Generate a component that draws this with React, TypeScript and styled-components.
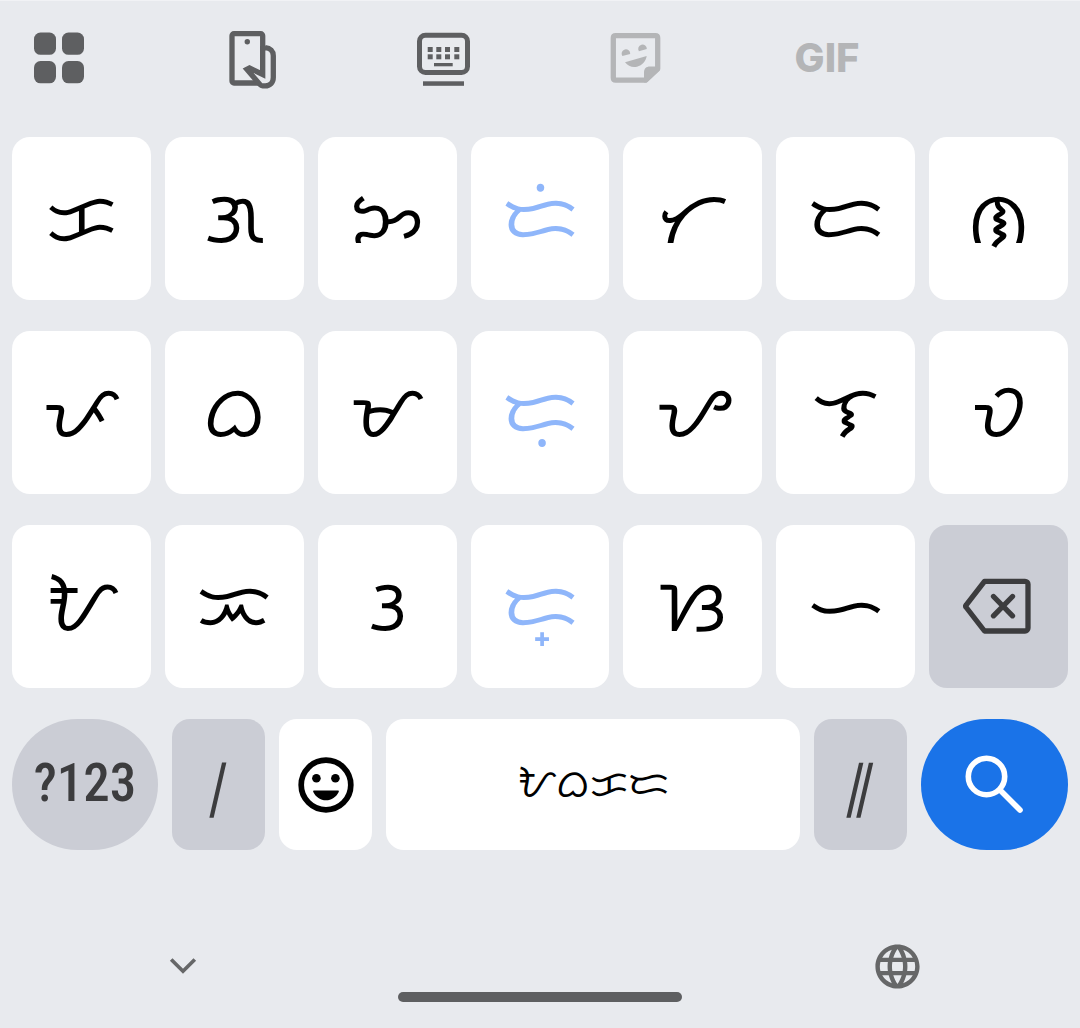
import React from "react";
import styled, { createGlobalStyle } from "styled-components";
import { MdLanguage } from "react-icons/md";

const GlobalStyle = createGlobalStyle`
  *, *::before, *::after { box-sizing: border-box; }
  body { margin: 0; background: #e8eaee; }
  button { margin: 0; padding: 0; border: 0; background: none; color: inherit; font: inherit; cursor: pointer; }
  svg { display: block; flex: none; }
`;

const Keyboard = styled.main`
  display: flex;
  flex-direction: column;
  border-top: 1px solid #f1f2f5;
  background: #e8eaee;
  color: #000;
  font-family: "Noto Sans Tagalog", "Noto Sans", Roboto, sans-serif;
`;

const Toolbar = styled.div`
  display: grid;
  grid-template-columns: repeat(6, 64px);
  justify-content: space-between;
  align-items: center;
  height: 136px;
  padding: 0 29px 22px 27px;
`;

const ToolButton = styled.button<{ $muted?: boolean }>`
  display: flex;
  align-items: center;
  justify-content: center;
  height: 64px;
  color: ${(p) => (p.$muted ? "#b4b5b7" : "#5e5f61")};
`;

const GifLabel = styled.span`
  font: 800 40px/64px Inter, Roboto, sans-serif;
`;

const Keys = styled.div`
  display: grid;
  gap: 31px;
  padding: 0 12px;
`;

const LetterRow = styled.div`
  display: grid;
  grid-template-columns: repeat(7, 1fr);
  grid-auto-rows: 163px;
  gap: 14px;
`;

const BottomRow = styled.div`
  display: grid;
  grid-template-columns: 146fr 93fr 93fr 414fr 93fr 147fr;
  grid-auto-rows: 131px;
  gap: 14px;
`;

type Tone = "plain" | "grey" | "action";

const tones: Record<Tone, { background: string; color: string }> = {
  plain: { background: "#fff", color: "#000" },
  grey: { background: "#cbcdd5", color: "#3c3c3e" },
  action: { background: "#1a73e8", color: "#fff" },
};

const Key = styled.button<{ $tone?: Tone; $round?: boolean }>`
  display: flex;
  align-items: center;
  justify-content: center;
  min-width: 0;
  border-radius: ${(p) => (p.$round ? "66px" : "18px")};
  background: ${(p) => tones[p.$tone ?? "plain"].background};
  color: ${(p) => tones[p.$tone ?? "plain"].color};
`;

const LetterKey = styled(Key)<{ $mark?: boolean }>`
  padding-bottom: 8px;
  font-size: 73px;
  line-height: 100px;
  color: ${(p) => (p.$mark ? "#8fb6fa" : "#000")};
`;

const SymbolsLabel = styled.span`
  padding-bottom: 4px;
  font: 500 53px/60px "Roboto Condensed", Roboto, sans-serif;
`;

const StopMark = styled.span`
  font-size: 62px;
  line-height: 80px;
`;

const SpaceLabel = styled.span`
  padding-bottom: 6px;
  font-size: 39px;
  line-height: 56px;
`;

const NavBar = styled.nav`
  display: flex;
  justify-content: space-between;
  padding: 90px 157px 0;
  color: #666768;
`;

const NavButton = styled.button`
  display: flex;
  align-items: center;
  justify-content: center;
  width: 52px;
  height: 52px;
`;

const HomeHandle = styled.div`
  align-self: center;
  width: 284px;
  height: 10px;
  margin-bottom: 26px;
  border-radius: 5px;
  background: #5e5f61;
`;

const AppsIcon = () => (
  <svg width="64" height="64" viewBox="0 0 64 64" fill="currentColor" aria-hidden="true">
    <rect x="7" y="6.5" width="22" height="22.3" rx="6.5" />
    <rect x="35" y="6.5" width="22" height="22.3" rx="6.5" />
    <rect x="7" y="35" width="22" height="22.3" rx="6.5" />
    <rect x="35" y="35" width="22" height="22.3" rx="6.5" />
  </svg>
);

const OneHandedIcon = () => (
  <svg width="64" height="64" viewBox="0 0 64 64" fill="none" stroke="currentColor" strokeWidth="5.3" aria-hidden="true">
    <rect x="13" y="7.7" width="30.7" height="49.3" rx="2" />
    <circle cx="28.3" cy="15.7" r="2.7" fill="currentColor" stroke="none" />
    <path d="M46.3 21.7c5 .4 8 3.5 8 8V51.5c0 5-3.4 8.3-8 8.3H43.5c-1 0-1.800-.5-2.400-1.200L27.500 43l2.500-1.600 13.700 6.800z" fill="#e8eaee" stroke="none" />
    <path d="M46.3 21.7c5 .4 8 3.5 8 8V51.5c0 5-3.4 8.3-8 8.3H43.500c-1 0-1.800-.5-2.400-1.200L27.900 43.300 30.500 42 43.700 48.400V20" />
  </svg>
);

const KeyboardIcon = () => (
  <svg width="64" height="64" viewBox="0 0 64 64" fill="currentColor" aria-hidden="true">
    <rect x="8.5" y="9.3" width="48" height="37.3" rx="6" fill="none" stroke="currentColor" strokeWidth="5" />
    {[16.7, 25.3, 34, 43.3].map((x) => (
      <g key={x}>
        <rect x={x} y="21" width="5" height="5" />
        <rect x={x} y="28.3" width="5" height="5" />
      </g>
    ))}
    <rect x="23" y="37" width="18.7" height="3.3" />
    <rect x="12" y="55.3" width="41" height="4.5" />
  </svg>
);

const StickerIcon = () => (
  <svg width="64" height="64" viewBox="0 0 64 64" fill="currentColor" aria-hidden="true">
    <path d="M54.7 42.8V12c0-1.500-.8-2.400-2.400-2.400H12.700c-1.600 0-2.400.9-2.400 2.400v39.800c0 1.500.8 2.400 2.400 2.400h30z" fill="none" stroke="currentColor" strokeWidth="5.3" strokeLinejoin="round" />
    <path d="M41 56.5V46.500c0-4 2.200-6 6-6h10V44L43.700 56.500z" />
    <path d="M19.300 30A4.300 4.300 0 1 1 27.200 27.900z" />
    <path d="M35.900 25.200A4.300 4.300 0 1 1 43.800 23.100z" />
    <path d="M22 36.300 43.700 30c-.7 5-4.500 9.500-9.700 10.700-4.700 1-9-.4-12-4.400z" />
  </svg>
);

const BackspaceIcon = () => (
  <svg width="72" height="60" viewBox="0 0 72 60" fill="none" stroke="currentColor" strokeWidth="5.3" strokeLinejoin="round" strokeLinecap="round" aria-hidden="true">
    <path d="M21.500 4.300H62a3 3 0 0 1 3 3V51a3 3 0 0 1-3 3H21.500L3.300 30.500a2 2 0 0 1 0-2.700z" />
    <path d="M30.500 19.500 49.500 38.800M49.500 19.500 30.500 38.800" />
  </svg>
);

const EmojiIcon = () => (
  <svg width="64" height="64" viewBox="0 0 64 64" fill="currentColor" aria-hidden="true">
    <circle cx="32" cy="32" r="24.8" fill="none" stroke="currentColor" strokeWidth="5.7" />
    <circle cx="22.4" cy="25.2" r="4.3" />
    <circle cx="41.4" cy="25.2" r="4.3" />
    <path d="M20.200 37.400H43.800c1 0 1.300.7.9 1.500C42.300 43.900 37.500 47.200 32 47.200s-10.300-3.300-12.700-8.300c-.4-.8-.1-1.500.9-1.500z" />
  </svg>
);

const SearchIcon = () => (
  <svg width="64" height="64" viewBox="0 0 64 64" fill="none" stroke="currentColor" strokeWidth="5.6" strokeLinecap="round" aria-hidden="true">
    <circle cx="23.5" cy="23.5" r="18.2" />
    <path d="M37 37 57 57" />
  </svg>
);

const ChevronIcon = () => (
  <svg width="32" height="32" viewBox="0 0 32 32" fill="none" stroke="currentColor" strokeWidth="3.7" aria-hidden="true">
    <path d="M4.200 9.500 16 21.200 27.800 9.500" />
  </svg>
);

interface Letter {
  text: string;
  mark?: boolean;
}

const rows: Letter[][] = [
  [{ text: "ᜃ" }, { text: "ᜄ" }, { text: "ᜅ" }, { text: "ᜇᜒ", mark: true }, { text: "ᜆ" }, { text: "ᜇ" }, { text: "ᜈ" }],
  [{ text: "ᜉ" }, { text: "ᜊ" }, { text: "ᜋ" }, { text: "ᜇᜓ", mark: true }, { text: "ᜌ" }, { text: "ᜎ" }, { text: "ᜏ" }],
  [{ text: "ᜀ" }, { text: "ᜁ" }, { text: "ᜂ" }, { text: "ᜇ᜔", mark: true }, { text: "ᜐ" }, { text: "ᜑ" }],
];

export default function App() {
  return (
    <>
      <GlobalStyle />
      <Keyboard>
        <Toolbar>
          <ToolButton aria-label="Menu"><AppsIcon /></ToolButton>
          <ToolButton aria-label="One-handed mode"><OneHandedIcon /></ToolButton>
          <ToolButton aria-label="Keyboard"><KeyboardIcon /></ToolButton>
          <ToolButton $muted aria-label="Stickers"><StickerIcon /></ToolButton>
          <ToolButton $muted><GifLabel>GIF</GifLabel></ToolButton>
        </Toolbar>
        <Keys>
          {rows.map((row, index) => (
            <LetterRow key={index}>
              {row.map(({ text, mark }) => (
                <LetterKey key={text} $mark={mark}>{text}</LetterKey>
              ))}
              {index === rows.length - 1 && (
                <Key $tone="grey" aria-label="Backspace"><BackspaceIcon /></Key>
              )}
            </LetterRow>
          ))}
          <BottomRow>
            <Key $tone="grey" $round><SymbolsLabel>?123</SymbolsLabel></Key>
            <Key $tone="grey"><StopMark>᜵</StopMark></Key>
            <Key aria-label="Emoji"><EmojiIcon /></Key>
            <Key><SpaceLabel>ᜀᜊᜃᜇ</SpaceLabel></Key>
            <Key $tone="grey"><StopMark>᜶</StopMark></Key>
            <Key $tone="action" $round aria-label="Search"><SearchIcon /></Key>
          </BottomRow>
        </Keys>
        <NavBar>
          <NavButton aria-label="Hide keyboard"><ChevronIcon /></NavButton>
          <NavButton aria-label="Change language"><MdLanguage size={53} /></NavButton>
        </NavBar>
        <HomeHandle />
      </Keyboard>
    </>
  );
}
